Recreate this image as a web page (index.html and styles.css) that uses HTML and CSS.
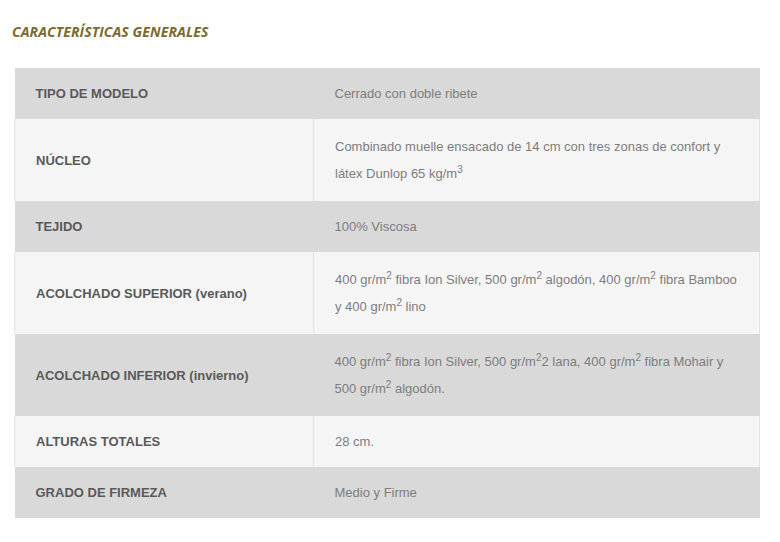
FILE: index.html
```html
<!DOCTYPE html>
<html lang="es">
<head>
<meta charset="utf-8">
<link rel="stylesheet" href="styles.css">
</head>
<body>
<h2 class="title">CARACTERÍSTICAS GENERALES</h2>
<table class="specs">
  <tr class="dark"><th>TIPO DE MODELO</th><td>Cerrado con doble ribete</td></tr>
  <tr class="light tall"><th>NÚCLEO</th><td>Combinado muelle ensacado de 14 cm con tres zonas de confort y látex Dunlop 65 kg/m<sup>3</sup></td></tr>
  <tr class="dark"><th>TEJIDO</th><td>100% Viscosa</td></tr>
  <tr class="light tall"><th>ACOLCHADO SUPERIOR (verano)</th><td>400 gr/m<sup>2</sup> fibra Ion Silver, 500 gr/m<sup>2</sup> algodón, 400 gr/m<sup>2</sup> fibra Bamboo y 400 gr/m<sup>2</sup> lino</td></tr>
  <tr class="dark tall"><th>ACOLCHADO INFERIOR (invierno)</th><td>400 gr/m<sup>2</sup> fibra Ion Silver, 500 gr/m<sup>2</sup>2 lana, 400 gr/m<sup>2</sup> fibra Mohair y 500 gr/m<sup>2</sup> algodón.</td></tr>
  <tr class="light"><th>ALTURAS TOTALES</th><td>28 cm.</td></tr>
  <tr class="dark"><th>GRADO DE FIRMEZA</th><td>Medio y Firme</td></tr>
</table>
</body>
</html>
```
FILE: styles.css
```css
html, body {
  margin: 0;
  padding: 0;
  background: #ffffff;
}
body {
  padding: 22px 20px 0 12px;
  font-family: "Liberation Sans", Arial, sans-serif;
}
.title {
  margin: 0 0 26px 0;
  font-family: "Open Sans", sans-serif;
  font-style: italic;
  font-weight: 700;
  font-size: 14px;
  line-height: 20px;
  color: #7a6a2c;
  letter-spacing: 0.1px;
}
.specs {
  margin-left: 2px;
  width: 746px;
  border-collapse: collapse;
  font-size: 13px;
}
.specs th, .specs td {
  padding: 12px 21px;
  line-height: 27px;
  text-align: left;
  vertical-align: middle;
}
.specs th {
  width: 256px;
  font-weight: 700;
  color: #595959;
}
.specs td {
  padding-right: 15px;
  color: #7d7d7d;
}
.specs .tall th, .specs .tall td {
  padding-top: 14px;
  padding-bottom: 14px;
}
.specs sup {
  line-height: 0;
  font-size: 10px;
}
.dark {
  background: #d9d9d9;
}
.light {
  background: #f5f5f5;
}
.light th {
  border-left: 1px solid #e3e3e3;
  border-right: 1px solid #e2e2e2;
}
.light td {
  border-right: 1px solid #e3e3e3;
}
```
